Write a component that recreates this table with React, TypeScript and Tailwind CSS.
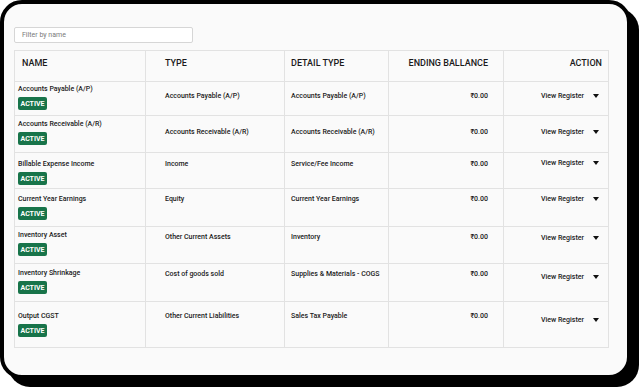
import React from "react";

type Row = {
  name: string;
  type: string;
  detail: string;
  h: string;
  nameT: string;
  typeT: string;
  balT: string;
  viewT: string;
};

const rows: Row[] = [
  { name: "Accounts Payable (A/P)", type: "Accounts Payable (A/P)", detail: "Accounts Payable (A/P)", h: "h-[34px]", nameT: "pt-[2px]", typeT: "pt-[9px]", balT: "pt-[9px]", viewT: "pt-[9px]" },
  { name: "Accounts Receivable (A/R)", type: "Accounts Receivable (A/R)", detail: "Accounts Receivable (A/R)", h: "h-[37px]", nameT: "pt-[3px]", typeT: "pt-[11px]", balT: "pt-[11px]", viewT: "pt-[11px]" },
  { name: "Billable Expense Income", type: "Income", detail: "Service/Fee Income", h: "h-[36px]", nameT: "pt-[6px]", typeT: "pt-[6px]", balT: "pt-[6px]", viewT: "pt-[5px]" },
  { name: "Current Year Earnings", type: "Equity", detail: "Current Year Earnings", h: "h-[38px]", nameT: "pt-[5px]", typeT: "pt-[5px]", balT: "pt-[5px]", viewT: "pt-[5px]" },
  { name: "Inventory Asset", type: "Other Current Assets", detail: "Inventory", h: "h-[37px]", nameT: "pt-[3px]", typeT: "pt-[5px]", balT: "pt-[5px]", viewT: "pt-[6px]" },
  { name: "Inventory Shrinkage", type: "Cost of goods sold", detail: "Supplies & Materials - COGS", h: "h-[38px]", nameT: "pt-[4px]", typeT: "pt-[5px]", balT: "pt-[5px]", viewT: "pt-[8px]" },
  { name: "Output CGST", type: "Other Current Liabilities", detail: "Sales Tax Payable", h: "h-[46px]", nameT: "pt-[9px]", typeT: "pt-[9px]", balT: "pt-[9px]", viewT: "pt-[13px]" },
];

const Caret = () => (
  <svg width="6" height="4" viewBox="0 0 6 4" className="ml-[9px]">
    <path d="M0 0 L6 0 L3 4 Z" fill="#111" />
  </svg>
);

export default function App() {
  return (
    <div className="w-[641px] h-[389px] bg-white overflow-hidden" style={{ fontFamily: "Roboto, 'Noto Sans', sans-serif" }}>
      <div className="w-[631px] h-[379px] border-[4px] border-black rounded-[22px] bg-[#fafafa] shadow-[8px_8px_0_0_#000] pl-[10px] pt-[23px]">
        <div className="w-[179px] h-[16px] border border-[#d6d6d6] rounded-[2px] bg-white pl-[7px] flex items-center">
          <span className="text-[7px] leading-[10px] text-[#7a7a7a]">Filter by name</span>
        </div>
        <div className="mt-[7px] w-[595px] border-t border-l border-r border-[#e2e2e2] text-[#1a1a1a]">
          <div className="grid grid-cols-[131px_139px_104px_115px_104px] h-[31px] border-b border-[#e2e2e2] text-[9px] leading-[12px] font-medium">
            <div className="border-r border-[#e2e2e2] pl-[7px] pt-[6px]">NAME</div>
            <div className="border-r border-[#e2e2e2] pl-[19px] pt-[6px]">TYPE</div>
            <div className="border-r border-[#e2e2e2] pl-[6px] pt-[6px]">DETAIL TYPE</div>
            <div className="border-r border-[#e2e2e2] pr-[15px] pt-[6px] text-right">ENDING BALLANCE</div>
            <div className="pr-[6px] pt-[6px] text-right">ACTION</div>
          </div>
          {rows.map((r) => (
            <div key={r.name} className={`grid grid-cols-[131px_139px_104px_115px_104px] border-b border-[#e2e2e2] text-[7px] leading-[10px] font-medium ${r.h}`}>
              <div className={`border-r border-[#e2e2e2] pl-[3px] ${r.nameT}`}>
                <div>{r.name}</div>
                <div className="mt-[3px] w-[29px] h-[13px] rounded-[2px] bg-[#18744a] text-white font-bold text-[7px] flex items-center justify-center">ACTIVE</div>
              </div>
              <div className={`border-r border-[#e2e2e2] pl-[19px] ${r.typeT}`}>{r.type}</div>
              <div className={`border-r border-[#e2e2e2] pl-[6px] ${r.typeT}`}>{r.detail}</div>
              <div className={`border-r border-[#e2e2e2] pr-[15px] text-right ${r.balT}`}>₹0.00</div>
              <div className={`pr-[9px] ${r.viewT}`}>
                <div className="flex items-center justify-end">
                  <span>View Register</span>
                  <Caret />
                </div>
              </div>
            </div>
          ))}
        </div>
      </div>
    </div>
  );
}
